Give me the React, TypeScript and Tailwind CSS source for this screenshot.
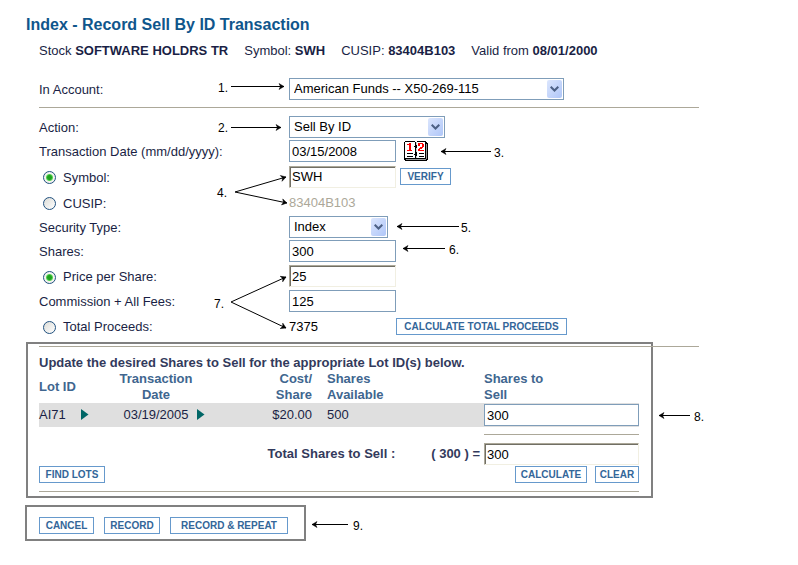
import type { ReactNode } from 'react';

const field = 'block h-[22px] w-[107px] border border-[#7f9db9] bg-white px-[2px] text-[13px] text-black outline-none';
const sunken =
  'block h-[22px] border border-t-[#aca899] border-l-[#aca899] border-r-[#f1efe2] border-b-[#f1efe2] bg-white px-[2px] text-[13px] text-black shadow-[inset_1px_1px_0_#716f64] outline-none';

function Button({ width, children }: { width: string; children: ReactNode }) {
  return (
    <button
      type="button"
      className={`h-[17px] shrink-0 whitespace-nowrap border border-[#6699cc] bg-white text-center text-[10px] leading-[15px] font-bold text-[#336699] ${width}`}
    >
      {children}
    </button>
  );
}

function Select({ id, options, width }: { id: string; options: string[]; width: string }) {
  return (
    <div className={`relative h-[22px] ${width}`}>
      <select
        id={id}
        className="block h-full w-full appearance-none border border-[#7f9db9] bg-white px-1 text-[13px] text-black outline-none"
      >
        {options.map((option) => (
          <option key={option}>{option}</option>
        ))}
      </select>
      <span className="pointer-events-none absolute top-[2px] right-[2px] flex h-[18px] w-[15px] items-center justify-center rounded-[2px] bg-linear-to-br from-[#dce6fd] to-[#afc6f8]">
        <svg width="9" height="6" viewBox="0 0 9 6" fill="none" stroke="#4d6185" strokeWidth="2">
          <path d="M0.7 0.7 4.5 4.5 8.3 0.7" />
        </svg>
      </span>
    </div>
  );
}

function Row({ label, htmlFor, height, children }: { label: string; htmlFor: string; height: string; children: ReactNode }) {
  return (
    <div className={`flex items-center ${height}`}>
      <label htmlFor={htmlFor} className="w-[250px] shrink-0 pt-[2px]">
        {label}
      </label>
      {children}
    </div>
  );
}

type RadioRowProps = { label: string; name: string; checked?: boolean; height: string; children: ReactNode };

function RadioRow({ label, name, checked, height, children }: RadioRowProps) {
  return (
    <div className={`flex items-center ${height}`}>
      <label className="flex w-[250px] shrink-0 items-center gap-[7px] pt-[2px] pl-1">
        <input
          type="radio"
          name={name}
          defaultChecked={checked}
          className="size-[13px] appearance-none rounded-full border border-[#21517f] bg-linear-to-br from-[#dcdcd7] to-white checked:bg-[radial-gradient(circle,#21a121_0_2px,#55d551_3px,#f3f3ef_4px)]"
        />
        <span>{label}</span>
      </label>
      {children}
    </div>
  );
}

function CalendarIcon() {
  return (
    <svg className="block" width="25" height="21" viewBox="0 0 25 21" shapeRendering="crispEdges">
      <path d="M1 0h10v1h2V0h9v1h1v1h1v17h-1v1H1v-1H0V1h1z" fill="#000" />
      <path d="M22 3h1v15h-1zM2 18h20v1H2z" fill="#999" />
      <path d="M1 1h10v16H1zM13 1h8v16h-8z" fill="#fff" />
      <path d="M5 2h2v7h1v1H3V9h2V4H3V3h2z" fill="#f00" />
      <path d="M14 2h5v1h1v3h-1v1h-1v1h-2v1h4v1h-6V8h1V7h1V6h2V3h-2v2h-2V3h0z" fill="#f00" />
      <path d="M3 12h6v1H3zM3 15h6v1H3zM15 12h5v1h-5zM15 15h5v1h-5z" fill="#000" />
      <path d="M11 2h1v16h-1zM12 4h1v2h-1zM10 5h1v1h-1zM12 12h1v2h-1zM10 13h1v1h-1z" fill="#000" />
      <path d="M12 1h1v3h-1zM12 7h1v4h-1zM12 15h1v2h-1z" fill="#ccc" />
    </svg>
  );
}

function Triangle() {
  return (
    <svg className="block" width="8" height="12" viewBox="0 0 8 12" fill="#006666">
      <path d="M0 0 7.5 5.5 0 11z" />
    </svg>
  );
}

const arrows = [
  'M231 86.500H284',
  'M231 127.500H281',
  'M491 151.500H441',
  'M235 192 286 177',
  'M235 192 287 203',
  'M459 226.500H397',
  'M445 248.500H403',
  'M231 302 286 277',
  'M231 302 286 328',
  'M690 415.500H659',
  'M348 524.500H312',
];

const numbers = [
  'top-[80px] left-[218px]',
  'top-[120px] left-[218px]',
  'top-[145px] left-[494px]',
  'top-[185px] left-[217px]',
  'top-[220px] left-[461px]',
  'top-[242px] left-[449px]',
  'top-[296px] left-[214px]',
  'top-[409px] left-[694px]',
  'top-[518px] left-[353px]',
];

function Callouts() {
  return (
    <div className="pointer-events-none absolute inset-0 text-[12px] leading-4 text-black">
      <svg className="absolute top-0 left-0" width="720" height="560" viewBox="0 0 720 560" fill="none" stroke="#000">
        <defs>
          <marker id="head" markerUnits="userSpaceOnUse" markerWidth="8" markerHeight="8" refX="6" refY="4" orient="auto">
            <path d="M1 1 6 4 1 7 2.500 4z" fill="#000" strokeWidth="0.5" />
          </marker>
        </defs>
        {arrows.map((d) => (
          <path key={d} d={d} markerEnd="url(#head)" />
        ))}
      </svg>
      {numbers.map((place, i) => (
        <span key={place} className={`absolute ${place}`}>
          {i + 1}.
        </span>
      ))}
    </div>
  );
}

function LotTable() {
  return (
    <table className="w-full table-fixed border-collapse text-left">
      <thead className="leading-4 text-[#40668f]">
        <tr className="h-8">
          <th className="w-[42px] p-0">Lot ID</th>
          <th className="w-[38px] p-0" />
          <th className="w-[74px] p-0 text-center">
            Transaction
            <br />
            Date
          </th>
          <th className="w-[21px] p-0" />
          <th className="w-[98px] p-0 text-right">
            Cost/
            <br />
            Share
          </th>
          <th className="p-0 pl-[15px]">
            Shares
            <br />
            Available
          </th>
          <th className="w-[155px] p-0">
            Shares to
            <br />
            Sell
          </th>
        </tr>
      </thead>
      <tbody>
        <tr className="h-6 bg-[#dfdfdf]">
          <td className="p-0">AI71</td>
          <td className="p-0">
            <Triangle />
          </td>
          <td className="p-0 text-center">03/19/2005</td>
          <td className="p-0 pl-1">
            <Triangle />
          </td>
          <td className="p-0 text-right">$20.00</td>
          <td className="p-0 pl-[15px]">500</td>
          <td className="p-0">
            <input aria-label="Shares to Sell" defaultValue="300" className="block h-[22px] w-full border border-[#7f9db9] bg-white px-[2px] text-[13px] text-black outline-none" />
          </td>
        </tr>
      </tbody>
    </table>
  );
}

export default function App() {
  return (
    <main className="relative min-h-screen bg-white pt-[17px] pb-6 font-['Liberation_Sans',Arial,sans-serif] text-[13px] leading-4 text-[#1a1f45]">
      <div className="w-full max-w-[699px]">
        <h1 className="pl-[26px] text-[16px] leading-4 font-bold text-[#0f568c]">Index - Record Sell By ID Transaction</h1>
        <p className="mt-[10px] flex gap-4 pl-[39px] whitespace-nowrap">
          <span>
            Stock <b>SOFTWARE HOLDRS TR</b>
          </span>
          <span>
            Symbol: <b>SWH</b>
          </span>
          <span>
            CUSIP: <b>83404B103</b>
          </span>
          <span>
            Valid from <b>08/01/2000</b>
          </span>
        </p>

        <form className="mt-[17px] pl-[39px]">
          <Row label="In Account:" htmlFor="account" height="h-[26px]">
            <Select id="account" width="w-[275px]" options={['American Funds -- X50-269-115']} />
          </Row>
          <hr className="mt-[5px] mb-[7px] border-[#aca899]" />
          <Row label="Action:" htmlFor="action" height="h-6">
            <Select id="action" width="w-[156px]" options={['Sell By ID']} />
          </Row>
          <Row label="Transaction Date (mm/dd/yyyy):" htmlFor="date" height="h-6">
            <input id="date" defaultValue="03/15/2008" className={field} />
            <button type="button" aria-label="Open calendar" className="ml-2">
              <CalendarIcon />
            </button>
          </Row>
          <RadioRow label="Symbol:" name="security" checked height="h-[27px]">
            <input aria-label="Symbol" defaultValue="SWH" className={`${sunken} mr-1 w-[107px]`} />
            <Button width="w-[51px]">VERIFY</Button>
          </RadioRow>
          <RadioRow label="CUSIP:" name="security" height="h-[25px]">
            <input aria-label="CUSIP" disabled defaultValue="83404B103" className="w-[107px] bg-white text-[13px] text-[#aca899]" />
          </RadioRow>
          <Row label="Security Type:" htmlFor="type" height="h-6">
            <Select id="type" width="w-[99px]" options={['Index']} />
          </Row>
          <Row label="Shares:" htmlFor="shares" height="h-6">
            <input id="shares" defaultValue="300" className={field} />
          </Row>
          <RadioRow label="Price per Share:" name="amount" checked height="h-[26px]">
            <input aria-label="Price per Share" defaultValue="25" className={`${sunken} w-[107px]`} />
          </RadioRow>
          <Row label="Commission + All Fees:" htmlFor="fees" height="h-6">
            <input id="fees" defaultValue="125" className={field} />
          </Row>
          <RadioRow label="Total Proceeds:" name="amount" height="h-[26px]">
            <output className="w-[107px] pt-[2px] text-black">7375</output>
            <Button width="w-[171px]">CALCULATE TOTAL PROCEEDS</Button>
          </RadioRow>
        </form>
      </div>

      <section className="mt-[3px] ml-[26px] w-full max-w-[627px] border-2 border-[#808080] pr-3 pl-[11px]">
        <hr className="mt-[2px] -mr-[60px] border-[#aca899]" />
        <h2 className="mt-2 font-bold text-[#333a5c]">Update the desired Shares to Sell for the appropriate Lot ID(s) below.</h2>
        <LotTable />
        <hr className="mt-[7px] ml-auto w-[155px] border-[#aca899]" />
        <div className="mt-2 flex items-center justify-end font-bold text-[#333a5c]">
          <label htmlFor="total" className="mr-9">
            Total Shares to Sell :
          </label>
          <span className="mr-1">( 300 ) =</span>
          <input id="total" defaultValue="300" className={`${sunken} w-[155px] font-normal`} />
        </div>
        <div className="mt-px flex gap-2">
          <Button width="w-[66px]">FIND LOTS</Button>
          <span className="flex-1" />
          <Button width="w-[72px]">CALCULATE</Button>
          <Button width="w-11">CLEAR</Button>
        </div>
        <hr className="mt-2 mb-1 border-[#aca899]" />
      </section>

      <section className="mt-[7px] ml-[25px] flex w-fit gap-[10px] border-2 border-[#808080] pt-[10px] pr-4 pb-[5px] pl-3">
        <Button width="w-[55px]">CANCEL</Button>
        <Button width="w-14">RECORD</Button>
        <Button width="w-[118px]">RECORD &amp; REPEAT</Button>
      </section>

      <Callouts />
    </main>
  );
}
